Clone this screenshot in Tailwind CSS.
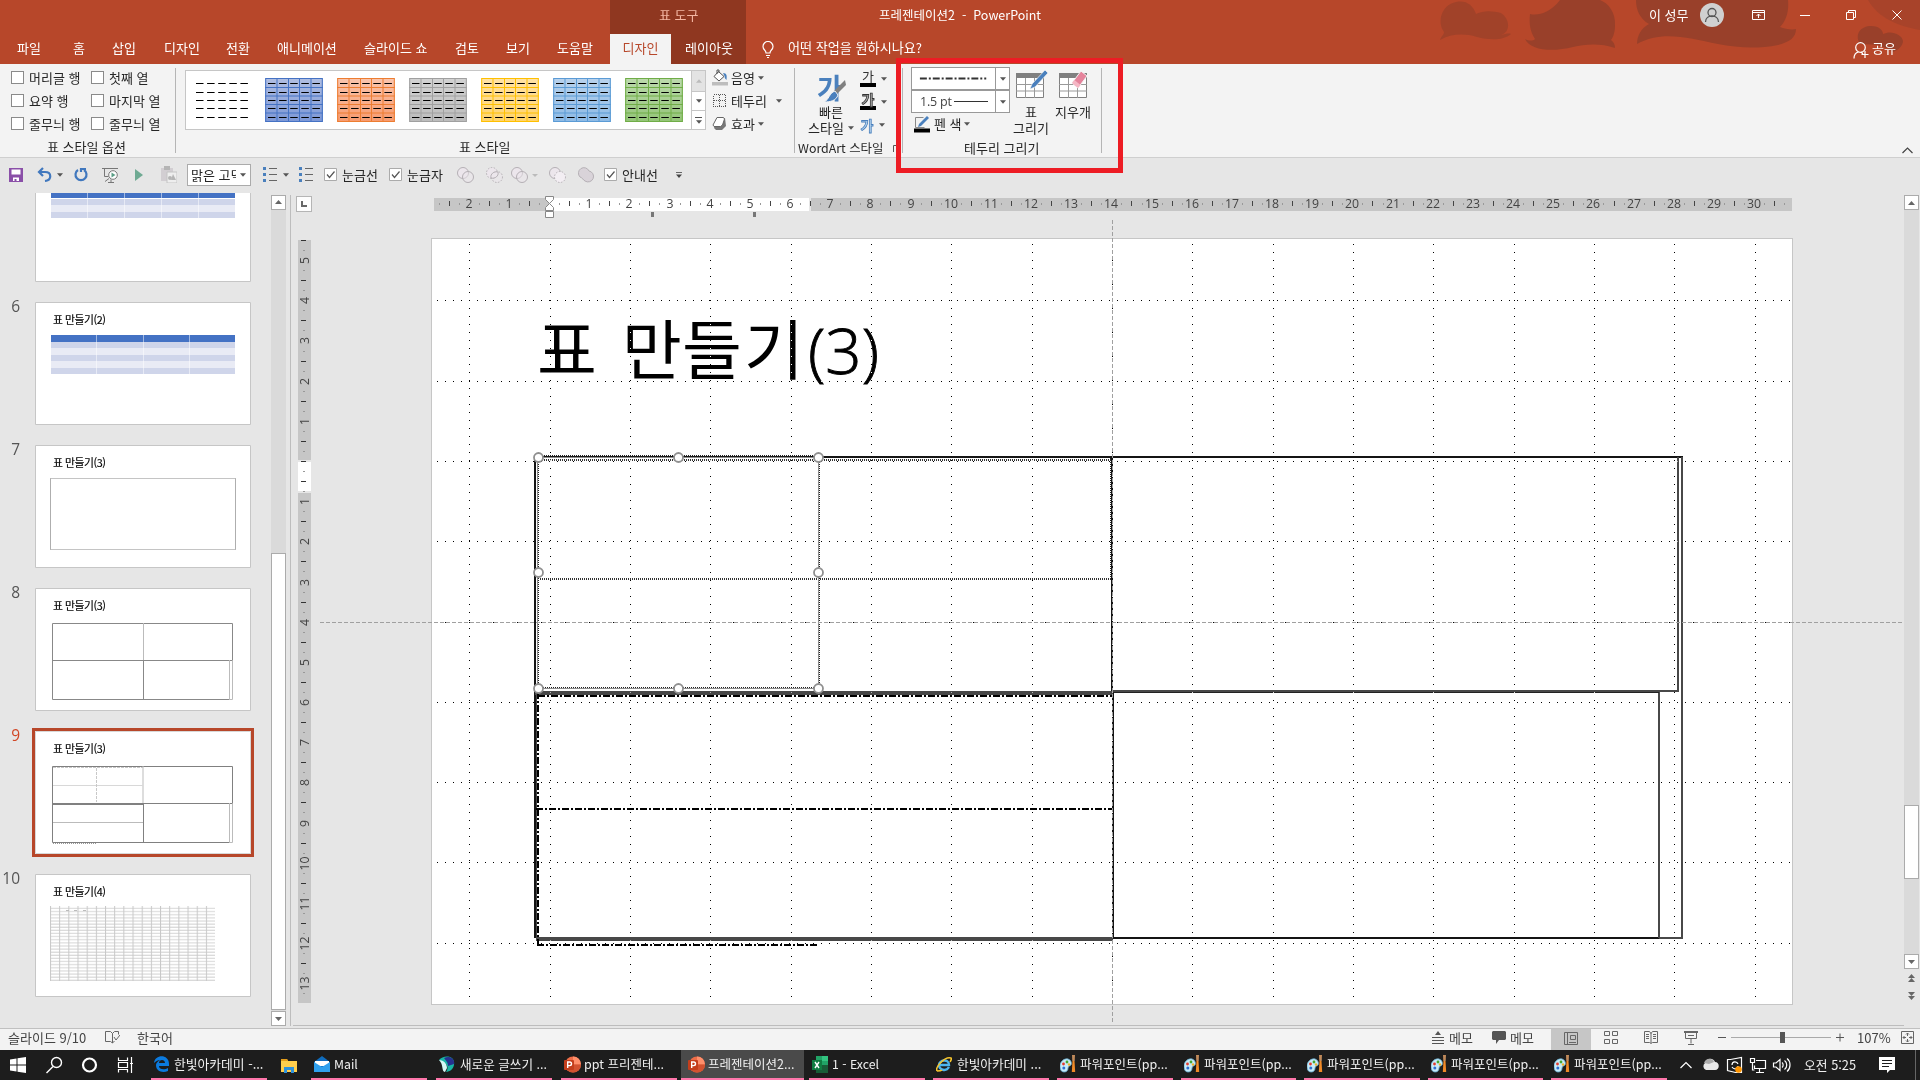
<!DOCTYPE html>
<html lang="ko">
<head>
    <meta charset="UTF-8">
    <meta name="viewport" content="width=device-width, initial-scale=1.0">
    <title>프레젠테이션2 - PowerPoint</title>
    <script src="https://cdn.jsdelivr.net/npm/@tailwindcss/browser@4"></script>
</head>
<body class="w-[1920px] h-[1080px] overflow-hidden relative flex flex-col bg-[#e6e6e6] text-[13px] leading-4 text-[#262626] whitespace-nowrap font-[family-name:'Noto_Sans_CJK_KR','Open_Sans',sans-serif]">
    <!-- shared symbols -->
    <svg class="hidden">
        <symbol id="caret" viewBox="0 0 7 4"><path d="M0 0h7L3.5 4z" fill="currentColor"/></symbol>
        <symbol id="caret-up" viewBox="0 0 7 4"><path d="M0 4h7L3.5 0z" fill="currentColor"/></symbol>
        <symbol id="dashes" viewBox="0 0 58 44">
            <path d="M3 5.5h54M3 14.5h54M3 22.5h54M3 30.5h54M3 39.5h54" stroke="#000" stroke-width="1.2" stroke-dasharray="7.5 3.6" fill="none"/>
        </symbol>
        <symbol id="grid" viewBox="0 0 58 44">
            <path d="M1 .5h56M0 9.5h58M0 18h58M0 26.5h58M0 35h58M1 43.5h56M.7 0v44M12 0v44M23.5 0v44M34.5 0v44M46 0v44M57.3 0v44" stroke="currentColor" stroke-width="1" fill="none"/>
        </symbol>
        <symbol id="paint" viewBox="0 0 16 18">
            <path d="M0 11c0-4 4-8 8-7 3 1 4 4 3 6-1 1-3 1-3 3s-1 4-4 4-4-3-4-6z" fill="#c9ebf7" stroke="#6cb5d8" stroke-width=".8"/>
            <circle cx="3.500" cy="9" r="1.400" fill="#e33b2e"/><circle cx="7" cy="7" r="1.400" fill="#45a832"/><circle cx="3.800" cy="13" r="1.500" fill="#2e6fd1"/><circle cx="9" cy="9.500" r="1.200" fill="#f1b12c"/>
            <path d="M12.500 6l-.7 11h3.400l-.7-11z" fill="#f08a28"/><path d="M12 0h3l-.3 6h-2.400z" fill="#c08a5b"/>
        </symbol>
        <symbol id="ppt" viewBox="0 0 17 17">
            <circle cx="9" cy="8.500" r="8" fill="#ed6c47"/><path d="M9 .5a8 8 0 0 1 8 8H9z" fill="#ff8f6b"/><path d="M1 8.500a8 8 0 0 0 16 0z" fill="#d35230"/>
            <rect x="0" y="4" width="10" height="10" rx="1" fill="#c43e1c"/><path d="M3.700 12V6h2a1.700 1.700 0 0 1 0 3.600h-2" fill="none" stroke="#fff" stroke-width="1.400"/>
        </symbol>
    </svg>

    <!-- title bar and tabs -->
    <header class="h-16 shrink-0 relative bg-[#b7472a] text-white">
        <svg class="absolute right-0 top-0" width="500" height="64" viewBox="1420 0 500 64">
            <g fill="#99402a">
                <path d="M1440 40c2-5 4-5 4-8-7-10-3-27 12-30 10-2 17 3 20 12 8-4 17-3 25-1 9 6 10 19 0 22 4-1 8-2 10-1-8 7-22 6-34 3-14-4-26-3-37 3z" opacity=".75"/>
                <path d="M1530 14c8 2 20-1 30-14h40c8 3 16 12 15 26 0 6-2 12-4 14 3 2 4 5 4 8-14-5-30-4-42-1-20 5-42 4-48-8 4 2 8 2 10 0-5-8-6-15-5-25z"/>
                <path d="M1636 0h152c1 10-1 20-8 27 5 2 12 3 16 2 0 8-6 13-18 16-20 4-40 3-60-1-30-6-56-14-81 0 0-8 4-16 12-20-9-5-13-14-13-24z"/>
                <path d="M1860 44c-6-10 1-18 11-18 9 0 12 5 12 8 8-4 19 0 20 7 0 4-4 9-10 11-10-8-24-8-33-8z"/>
                <path d="M1868 0c10 18 30 26 52 30V0z" opacity=".5"/>
            </g>
        </svg>
        <div class="absolute left-[610px] top-0 w-[136px] h-16 bg-[#8f3720]"></div>
        <div class="relative h-[34px] flex items-center pt-0">
            <span class="ml-[659px] w-[220px] text-[#f3b6a2] -mt-1">표 도구</span>
            <span class="w-[770px] -mt-1 text-[12.5px]">프레젠테이션2&nbsp; - &nbsp;PowerPoint</span>
            <span class="w-[51px] -mt-1">이 성무</span>
            <svg class="-mt-1" width="210" height="26" viewBox="1700 2 210 26" fill="none" stroke="#fff">
                <circle cx="1712" cy="15" r="12" fill="#d0d0d0" stroke="none"/>
                <g stroke="#555" stroke-width="1.300"><circle cx="1712" cy="12.500" r="4"/><path d="M1705.500 22c0-8 13-8 13 0"/></g>
                <path d="M1752.500 10.500h12v9h-12zM1752.500 12.500h12M1758.500 18v-4M1756.500 16l2-2 2 2"/>
                <path d="M1800 15.500h10M1846.500 12.500h7v7h-7zM1848.500 12.500v-2h7v7h-2M1892.500 10.500l9 9M1901.500 10.500l-9 9"/>
            </svg>
        </div>
        <nav class="relative h-[30px] flex items-center pl-[17px] pb-[2px]">
            <span class="w-[56px]">파일</span><span class="w-[39px]">홈</span><span class="w-[52px]">삽입</span><span class="w-[62px]">디자인</span><span class="w-[51px]">전환</span><span class="w-[87px]">애니메이션</span><span class="w-[91px]">슬라이드 쇼</span><span class="w-[51px]">검토</span><span class="w-[51px]">보기</span><span class="w-[53px]">도움말</span>
            <span class="w-[61px] h-[30px] -mb-[2px] bg-[#f3f3f3] text-[#b7472a] text-center leading-[28px]">디자인</span>
            <span class="w-[91px] pl-[14px]">레이아웃</span>
            <svg class="mt-1" width="12" height="18" viewBox="0 0 12 18" fill="none" stroke="#fff" stroke-width="1.200"><path d="M4 12c0-3-3-3-3-6.500a5 5 0 0 1 10 0C11 9 8 9 8 12zM4 14.500h4M5 16.500h2"/></svg>
            <span class="ml-[14px] w-[1065px] text-[13.1px]">어떤 작업을 원하시나요?</span>
            <svg class="mt-1" width="16" height="17" viewBox="0 0 16 17" fill="none" stroke="#fff" stroke-width="1.200"><circle cx="7.500" cy="5.500" r="4.800"/><path d="M1 16.500c0-4 2-6 4.500-6.500M8 10l2 2M12 9v7M8.500 12.500h7"/></svg>
            <span class="ml-[3px]">공유</span>
        </nav>
    </header>

    <!-- ribbon -->
    <section class="h-[94px] shrink-0 bg-[#f3f3f3] border-b border-[#cfcfcf] flex pt-1">
        <div class="w-[176px] h-[85px] border-r border-[#b5b5b5] flex flex-col">
            <div class="grid grid-cols-[80px_90px] content-start pl-[11px] -mt-[2px] h-[74px]">
                <label class="flex items-center gap-[5px] h-[23px]"><i class="size-[13px] border border-[#8a8a8a] bg-white"></i>머리글 행</label>
                <label class="flex items-center gap-[5px] h-[23px]"><i class="size-[13px] border border-[#8a8a8a] bg-white"></i>첫째 열</label>
                <label class="flex items-center gap-[5px] h-[23px]"><i class="size-[13px] border border-[#8a8a8a] bg-white"></i>요약 행</label>
                <label class="flex items-center gap-[5px] h-[23px]"><i class="size-[13px] border border-[#8a8a8a] bg-white"></i>마지막 열</label>
                <label class="flex items-center gap-[5px] h-[23px]"><i class="size-[13px] border border-[#8a8a8a] bg-white"></i>줄무늬 행</label>
                <label class="flex items-center gap-[5px] h-[23px]"><i class="size-[13px] border border-[#8a8a8a] bg-white"></i>줄무늬 열</label>
            </div>
            <div class="text-center pt-1 pr-[2px]">표 스타일 옵션</div>
        </div>

        <div class="w-[619px] h-[85px] border-r border-[#b5b5b5] flex flex-col">
            <div class="flex pl-[9px] pt-[2px] h-[72px]">
                <div class="w-[507px] h-[60px] bg-white border border-[#c6c6c6] flex gap-[14px] pl-[7px] pt-[7px]">
                    <svg class="w-[58px] h-11"><use href="#dashes"/></svg>
                    <svg class="w-[58px] h-11 bg-linear-to-b from-[#b1bee1] to-[#7c97d6] text-[#4472c4]"><use href="#grid"/><use href="#dashes"/></svg>
                    <svg class="w-[58px] h-11 bg-linear-to-b from-[#f9c5ae] to-[#f69a6e] text-[#ed7d31]"><use href="#grid"/><use href="#dashes"/></svg>
                    <svg class="w-[58px] h-11 bg-linear-to-b from-[#d3d3d3] to-[#bcbcbc] text-[#a0a0a0]"><use href="#grid"/><use href="#dashes"/></svg>
                    <svg class="w-[58px] h-11 bg-linear-to-b from-[#ffe2a8] to-[#ffd36a] text-[#ffc000]"><use href="#grid"/><use href="#dashes"/></svg>
                    <svg class="w-[58px] h-11 bg-linear-to-b from-[#b9d2ec] to-[#8dbae5] text-[#5b9bd5]"><use href="#grid"/><use href="#dashes"/></svg>
                    <svg class="w-[58px] h-11 bg-linear-to-b from-[#bddaae] to-[#93c477] text-[#70ad47]"><use href="#grid"/><use href="#dashes"/></svg>
                </div>
                <div class="w-[15px] h-[60px] -ml-px flex flex-col border border-[#c6c6c6] bg-white text-[#555]">
                    <div class="h-[21px] bg-[#e3e3e3] border-b border-[#c6c6c6] flex items-center justify-center text-[#bbb]"><svg class="w-[6px] h-[4px]"><use href="#caret-up"/></svg></div>
                    <div class="h-[19px] border-b border-[#c6c6c6] flex items-center justify-center"><svg class="w-[6px] h-[4px]"><use href="#caret"/></svg></div>
                    <div class="grow flex flex-col gap-[2px] items-center justify-center"><i class="w-[7px] h-px bg-[#555]"></i><svg class="w-[6px] h-[4px]"><use href="#caret"/></svg></div>
                </div>
                <div class="pl-[6px] -mt-[4px]">
                    <div class="h-[23px] flex items-center">
                        <svg width="16" height="17" viewBox="0 0 16 17"><path d="M0 13h16v3.500H0z" fill="#bdbdbd"/><path d="M6.500 2.500l5.500 5-5 4.500-5-4.500zM5 5V1h2v3" fill="#fff" stroke="#555"/><path d="M11 4c4 0 4 3 3.500 7-1-1-2-2-2-4z" fill="#4a80bd"/></svg>
                        <span class="w-[27px] ml-[3px]">음영</span><svg class="w-[6px] h-[4px] text-[#555]"><use href="#caret"/></svg>
                    </div>
                    <div class="h-[23px] flex items-center">
                        <svg width="16" height="15" viewBox="0 0 16 15"><path d="M1.500 1.500h12v12h-12zM7.500 1.500v12M1.500 7.500h12" fill="none" stroke="#555" stroke-dasharray="1 1" shape-rendering="crispEdges"/></svg>
                        <span class="w-[45px] ml-[3px]">테두리</span><svg class="w-[6px] h-[4px] text-[#555]"><use href="#caret"/></svg>
                    </div>
                    <div class="h-[23px] flex items-center">
                        <svg width="16" height="15" viewBox="0 0 16 15"><path d="M2 12l2-9 9-1 1 8-4 4H4z" fill="#777"/><path d="M5 1.500h6.500l1 1.500-2 6-2 1.500H2L1 9z" fill="#fff" stroke="#666"/></svg>
                        <span class="w-[27px] ml-[3px]">효과</span><svg class="w-[6px] h-[4px] text-[#555]"><use href="#caret"/></svg>
                    </div>
                </div>
            </div>
            <div class="pl-[283px] pt-1">표 스타일</div>
        </div>

        <div class="w-[108px] h-[85px] border-r border-[#b5b5b5] flex flex-col">
            <div class="flex h-[72px]">
                <div class="w-[62px] pl-[12px] flex flex-col items-center">
                    <div class="relative w-[30px] h-[34px] mt-1 text-[#4a80bd] text-[28px] leading-[30px] font-bold">가
                        <svg class="absolute left-0 top-0" width="30" height="34" viewBox="0 0 30 34"><path d="M28 8l1 5-9 9-3-3z" fill="#808080"/><path d="M18 19l3 4c-2 6-8 7-14 7 5-2 5-9 11-11z" fill="#4a80bd" stroke="#f3f3f3"/></svg>
                    </div>
                    <span class="mt-[-2px] mr-[2px]">빠른</span>
                    <span class="flex items-center gap-[4px] mr-[2px]">스타일<svg class="w-[6px] h-[4px] text-[#555]"><use href="#caret"/></svg></span>
                </div>
                <div class="ml-[3px] -mt-[1px] text-[#555]">
                    <div class="h-[23px] flex items-center"><span class="w-4 h-[17px] border-b-4 border-black text-[13px] leading-[12px] text-center text-[#333] mr-[5px]">가</span><svg class="w-[6px] h-[4px]"><use href="#caret"/></svg></div>
                    <div class="h-[23px] flex items-center"><span class="w-4 h-[17px] border-b-4 border-black text-[14px] leading-[12px] text-center font-bold text-[#aaa] [-webkit-text-stroke:0.8px_#333] mr-[5px]">가</span><svg class="w-[6px] h-[4px]"><use href="#caret"/></svg></div>
                    <div class="h-[23px] flex items-center"><span class="w-[14px] text-[14px] font-bold text-[#b5d3ee] [-webkit-text-stroke:0.8px_#4a80bd] mr-[5px] text-center">가</span><svg class="w-[6px] h-[4px]"><use href="#caret"/></svg></div>
                </div>
            </div>
            <div class="pl-[3px] pt-1 flex justify-between items-center"><span class="text-[12.4px]">WordArt 스타일</span>
                <svg width="10" height="9" viewBox="0 0 10 9" fill="none" stroke="#555"><path d="M1.500 8V1.500H8M4 4l4 4M8.500 4.500v4H5"/></svg></div>
        </div>

        <div class="w-[199px] h-[85px] border-r border-[#b5b5b5] flex flex-col">
            <div class="flex h-[72px]">
                <div class="w-[106px] pl-2">
                    <div class="w-[99px] h-[23px] -mt-px bg-white border border-[#999] flex">
                        <svg width="84" height="21" viewBox="0 0 84 21"><path d="M8 10.500h67" stroke="#333" stroke-width="2" stroke-dasharray="7 2 2 2"/></svg>
                        <div class="w-[14px] border-l border-[#999] flex items-center justify-center text-[#555]"><svg class="w-[6px] h-[4px]"><use href="#caret"/></svg></div>
                    </div>
                    <div class="w-[99px] h-[23px] bg-white border border-[#999] flex">
                        <div class="w-[84px] pl-[8px] flex items-center gap-[2px] text-[12.5px] text-[#444] font-[family-name:'Open_Sans']"><span class="w-8 tracking-[-0.2px]">1.5 pt</span><i class="w-[34px] h-px bg-[#333]"></i></div>
                        <div class="w-[14px] border-l border-[#999] flex items-center justify-center text-[#555]"><svg class="w-[6px] h-[4px]"><use href="#caret"/></svg></div>
                    </div>
                    <div class="h-[22px] flex items-center pl-[3px]">
                        <svg width="16" height="17" viewBox="0 0 16 17"><path d="M1.500 1.500h8M1.500 1.500v10h9" stroke="#888" fill="none"/><path d="M13 0l2 2-8 8-3 1 1-3z" fill="#4a80bd"/><path d="M0 12.500h16v4H0z"/></svg>
                        <span class="w-[30px] ml-[4px]">펜 색</span><svg class="w-[6px] h-[4px] text-[#555]"><use href="#caret"/></svg>
                    </div>
                </div>
                <div class="w-[44px] flex flex-col items-center pt-[2px]">
                    <svg class="ml-[3px]" width="33" height="30" viewBox="0 0 33 30"><path d="M.5 4h27v23.500H.5z" fill="#fff" stroke="#808080"/><path d="M0 3h28v5H0z" fill="#808080"/><path d="M0 14.500h28M0 21h28M9.500 8v20M18.500 8v20" stroke="#999"/><path d="M29 0l3 3-13 14-5 2 2-5z" fill="#4a80bd" stroke="#f3f3f3" stroke-width=".7"/></svg>
                    <span class="mt-1">표</span><span>그리기</span>
                </div>
                <div class="w-[40px] flex flex-col items-center pt-[2px]">
                    <svg width="29" height="30" viewBox="0 0 29 30"><path d="M.5 4h27v23.500H.5z" fill="#fff" stroke="#808080"/><path d="M0 3h28v5H0z" fill="#808080"/><path d="M0 14.500h28M0 21h28M9.500 8v20M18.500 8v20" stroke="#999"/><path d="M22 1l6 5-9 12-6-5z" fill="#e5839b" stroke="#f3f3f3"/><path d="M15.500 10l6 5-2.500 3-6-5z" fill="#f5b6c4"/></svg>
                    <span class="mt-1">지우개</span>
                </div>
            </div>
            <div class="pl-[61px] pt-1">테두리 그리기</div>
        </div>
        <svg class="ml-auto mr-[7px] mt-[79px]" width="11" height="7" viewBox="0 0 11 7" fill="none" stroke="#444" stroke-width="1.200"><path d="M.5 6l5-5 5 5"/></svg>
    </section>

    <!-- quick access toolbar -->
    <section class="h-[35px] shrink-0 flex items-center pl-[9px] pb-[2px] text-[#555]">
        <svg width="14" height="14" viewBox="0 0 14 14"><path d="M0 0h14v14H0z" fill="#8a4fa8"/><path d="M2.500 1.500h9v5h-9zM4 9.500h6V13H4z" fill="#fff"/><path d="M5.500 11h2v3h-2z" fill="#8a4fa8"/></svg>
        <svg class="ml-[14px]" width="15" height="15" viewBox="0 0 15 15" fill="none" stroke="#4178be" stroke-width="2.200"><path d="M6 1L2 5l4 4M2.500 5H8c7 0 7 8 0 9"/></svg>
        <svg class="w-[6px] h-[4px] ml-[5px]"><use href="#caret"/></svg>
        <svg class="ml-[11px]" width="14" height="15" viewBox="0 0 14 15" fill="none" stroke="#4178be" stroke-width="2.200"><path d="M4 3a5.500 5.500 0 1 0 6 0M7 5V2h5"/></svg>
        <svg class="ml-[14px]" width="16" height="16" viewBox="0 0 16 16" fill="none" stroke="#777"><path d="M0 1.500h16M2.500 2v7.500h4M6 15.500h6M3 14.500l4-3"/><circle cx="11" cy="8" r="4.300" fill="#fff"/><path d="M9.500 5.500l4 2.500-4 2.500z" fill="#5b9e86" stroke="none"/><path d="M9 12.500v3"/></svg>
        <svg class="ml-[17px]" width="8" height="12" viewBox="0 0 8 12"><path d="M0 0l8 6-8 6z" fill="#6faa93"/></svg>
        <svg class="ml-[18px]" width="16" height="17" viewBox="0 0 16 17"><path d="M0 2h12v13H0z" fill="#d2ced2"/><path d="M3 0h6v4H3z" fill="#b5b5b5"/><path d="M6 6h10v11H6z" fill="#eee" stroke="#c4c4c4"/><circle cx="9" cy="12" r="2" fill="#b5b5b5"/><path d="M12 8l3 6h-5z" fill="#b5b5b5"/></svg>
        <div class="ml-[10px] w-[64px] h-[22px] border border-[#ababab] bg-white flex items-center pl-[3px] text-[#262626]"><span class="w-[45px] overflow-hidden text-[13px]">맑은 고딕</span><svg class="w-[6px] h-[4px] ml-[4px] text-[#555]"><use href="#caret"/></svg></div>
        <svg class="ml-[12px]" width="14" height="16" viewBox="0 0 14 16"><path d="M0 0h3v3H0zM0 6h3v3H0zM0 12h3v3H0z" fill="#4a80bd"/><path d="M6 1.500h8M6 7.500h8M6 13.500h8" stroke="#666" stroke-width="1.200"/></svg>
        <svg class="w-[6px] h-[4px] ml-[6px]"><use href="#caret"/></svg>
        <svg class="ml-[10px]" width="14" height="16" viewBox="0 0 14 16"><path d="M0 0h3v3H0zM0 6h3v3H0zM0 12h3v3H0z" fill="#4a80bd"/><path d="M6 1.500h8M6 7.500h8M6 13.500h8" stroke="#666" stroke-width="1.200"/></svg>
        <svg class="ml-[11px]" width="13" height="13" viewBox="0 0 13 13"><path d="M.5.5h12v12H.5z" fill="#fff" stroke="#ababab"/><path d="M3 6.500l2.500 3 5-6" fill="none" stroke="#555" stroke-width="1.200"/></svg>
        <span class="ml-[5px] w-[47px] text-[#262626]">눈금선</span>
        <svg width="13" height="13" viewBox="0 0 13 13"><path d="M.5.5h12v12H.5z" fill="#fff" stroke="#ababab"/><path d="M3 6.500l2.500 3 5-6" fill="none" stroke="#555" stroke-width="1.200"/></svg>
        <span class="ml-[5px] w-[49px] text-[#262626]">눈금자</span>
        <svg width="142" height="18" viewBox="456 166 142 18" fill="#ece6ec" stroke="#b5b0b5">
            <circle cx="463" cy="173" r="5.500"/><circle cx="468" cy="177" r="5.500" fill-opacity=".5"/>
            <circle cx="492" cy="173" r="5.500" stroke-dasharray="1.500 1.500"/><circle cx="497" cy="177" r="5.500" fill-opacity=".5" stroke-dasharray="1.500 1.500"/><path d="M491 178c-1-4 3-7 7-6 1 4-3 7-7 6z"/>
            <circle cx="517" cy="173" r="5.500"/><circle cx="522" cy="177" r="5.500" fill-opacity=".5"/>
            <path d="M532 174h6l-3 3z" fill="#bbb" stroke="none"/>
            <circle cx="555" cy="173" r="5.500"/><circle cx="560" cy="177" r="5.500" fill="#f3eef3" stroke-dasharray="1.500 1.500"/>
            <path d="M580 177a5.500 5.500 0 1 1 9-6 5.500 5.500 0 1 1-4 10c-2-1-2-3-5-4z" fill="#d9d3d9"/>
        </svg>
        <svg class="ml-[6px]" width="13" height="13" viewBox="0 0 13 13"><path d="M.5.5h12v12H.5z" fill="#fff" stroke="#ababab"/><path d="M3 6.500l2.500 3 5-6" fill="none" stroke="#555" stroke-width="1.200"/></svg>
        <span class="ml-[5px] w-[54px] text-[#262626]">안내선</span>
        <svg width="6" height="6" viewBox="0 0 7 7"><path d="M0 .5h7" stroke="#444"/><path d="M0 3h7L3.500 7z" fill="#444"/></svg>
    </section>

    <main class="h-[836px] shrink-0 flex border-b border-[#c0c0c0]">
        <!-- slide thumbnails -->
        <aside class="w-[271px] h-[833px] overflow-hidden flex flex-col gap-5 text-[15.5px] text-[#555]">
            <div class="flex h-[89px] shrink-0"><span class="w-[35px]"></span>
                <svg width="216" height="89" viewBox="35 193 216 89"><path d="M35.500 193v88.500h215V193" fill="#fff" stroke="#c6c6c6"/><path d="M51 193h184v5H51z" fill="#4472c4"/><path d="M51 199h184v6H51zM51 212h184v6H51z" fill="#cfd5ea"/><path d="M51 205h184v7H51z" fill="#e9ebf5"/><path d="M87.500 193v25M124.500 193v25M161.500 193v25M198.500 193v25" stroke="#fff" stroke-opacity=".5"/></svg>
            </div>
            <div class="flex h-[123px] shrink-0"><span class="w-[20px] mr-[15px] text-right leading-[9px] font-[family-name:'Open_Sans']">6</span>
                <svg width="216" height="123" viewBox="35 302 216 123"><path d="M35.500 302.500h215v122h-215z" fill="#fff" stroke="#c6c6c6"/><text x="53" y="324" font-size="10.800" fill="#000" stroke="#000" stroke-width=".15" textLength="53">표 만들기(2)</text><path d="M51 335h184v7H51z" fill="#4472c4"/><path d="M51 342h184v6H51zM51 355h184v6H51zM51 368h184v6H51z" fill="#cfd5ea"/><path d="M51 348h184v7H51zM51 361h184v7H51z" fill="#e9ebf5"/><path d="M96.500 335v39M143.500 335v39M189.500 335v39" stroke="#fff" stroke-opacity=".5"/></svg>
            </div>
            <div class="flex h-[123px] shrink-0"><span class="w-[20px] mr-[15px] text-right leading-[9px] font-[family-name:'Open_Sans']">7</span>
                <svg width="216" height="123" viewBox="35 445 216 123"><path d="M35.500 445.500h215v122h-215z" fill="#fff" stroke="#c6c6c6"/><text x="53" y="467" font-size="10.800" fill="#000" stroke="#000" stroke-width=".15" textLength="53">표 만들기(3)</text><path d="M50.500 478.500h185v71h-185z" fill="none" stroke="#c4c4c4"/><path d="M50.500 478.500v71M235.500 478.500v71" stroke="#999" stroke-dasharray="1 1"/></svg>
            </div>
            <div class="flex h-[123px] shrink-0"><span class="w-[20px] mr-[15px] text-right leading-[9px] font-[family-name:'Open_Sans']">8</span>
                <svg width="216" height="123" viewBox="35 588 216 123"><path d="M35.500 588.500h215v122h-215z" fill="#fff" stroke="#c6c6c6"/><text x="53" y="610" font-size="10.800" fill="#000" stroke="#000" stroke-width=".15" textLength="53">표 만들기(3)</text><path d="M52.500 699.500v-76h180v37M52.500 660.500h180M52.500 699.500h177M143.500 660v39" fill="none" stroke="#888"/><path d="M143.500 623v37M229.500 660v39.500h3v-39" fill="none" stroke="#bbb"/></svg>
            </div>
            <div class="flex h-[123px] shrink-0"><span class="w-[20px] mr-[12px] text-right leading-[9px] text-[#d24726] font-[family-name:'Open_Sans']">9</span>
                <svg class="-mt-[3px]" width="222" height="129" viewBox="32 728 222 129"><path d="M33.500 729.500h219v126h-219z" fill="#fff" stroke="#b7472a" stroke-width="3"/><path d="M35.500 731.500h215v122h-215z" fill="none" stroke="#d8d8d8"/><text x="53" y="753" font-size="10.800" fill="#000" stroke="#000" stroke-width=".15" textLength="53">표 만들기(3)</text><path d="M52.500 842.500v-76h180v37M52.500 803.500h180M52.500 842.500h177M143.500 804v38M53 804.500h90" fill="none" stroke="#808080"/><path d="M143 766v37M53 822.500h90M229.500 803v39.500h3v-39" fill="none" stroke="#bbb"/><path d="M53 785.500h90" stroke="#d8d8d8"/><path d="M96.500 768v34M53 767.500h90" stroke="#c8c8c8" stroke-dasharray="3 1" fill="none"/><path d="M53 843.500h44" stroke="#999" stroke-dasharray="1 1"/></svg>
            </div>
            <div class="flex h-[123px] shrink-0"><span class="w-[20px] mr-[15px] flex justify-end leading-[9px] font-[family-name:'Open_Sans']">10</span>
                <svg width="216" height="123" viewBox="35 874 216 123">
                    <defs><pattern id="cells" x="50" y="906" width="9.170" height="3.120" patternUnits="userSpaceOnUse"><path d="M0 2.500h9.200" stroke="#d2d2d2"/><path d="M.5 0v3.200" stroke="#c8c8c8"/></pattern></defs>
                    <path d="M35.500 874.500h215v122h-215z" fill="#fff" stroke="#c6c6c6"/><text x="53" y="896" font-size="10.800" fill="#000" stroke="#000" stroke-width=".15" textLength="53">표 만들기(4)</text><path d="M50 906h165v75H50z" fill="url(#cells)"/><path d="M66 910.500h3M74 910.500h3M83 910.500h3" stroke="#bbb"/></svg>
            </div>
        </aside>
        <div class="w-[15px] mt-[2px] h-[831px] flex flex-col bg-[#dadada] text-[#666]">
            <div class="size-[15px] bg-white border border-[#ababab] flex items-center justify-center"><svg class="w-[7px] h-[4px]"><use href="#caret-up"/></svg></div>
            <div class="mt-[343px] h-[458px] bg-white border border-[#ababab]"></div>
            <div class="mt-px size-[15px] bg-white border border-[#ababab] flex items-center justify-center"><svg class="w-[7px] h-[4px]"><use href="#caret"/></svg></div>
        </div>

        <!-- rulers and slide -->
        <svg id="stage" width="1618" height="835" viewBox="286 193 1618 835" shape-rendering="crispEdges">
            <path d="M290.500 195v831M293 1025.500h1611" stroke="#bdbdbd"/>
            <rect x="296.500" y="196.500" width="15" height="15" fill="#fdfdfd" stroke="#b5b5b5"/><path d="M302 201v5h5" fill="none" stroke="#666" stroke-width="2"/>
            <path d="M298 240h13v220h-13zM298 493h13v510h-13zM434 198h115v13H434zM811 198h981v13H811z" fill="#c6c6c6"/>
            <path d="M298 462h13v29h-13zM549 198h260v13H549z" fill="#fff"/>
            <g id="ruler" font-size="12.300" fill="#444" text-anchor="middle" font-family="'Open Sans'"></g>
            <path d="M545.500 196.500h8v3l-4 4 4 4v3h-8v-3l4-4-4-4zM545.500 211.500h8v6h-8z" fill="#fff" stroke="#888" shape-rendering="auto"/>
            <path d="M651 212h3v5h-3zM753 212h3v5h-3z" fill="#777"/>

            <rect x="431.500" y="238.500" width="1361" height="766" fill="#fff" stroke="#c6c6c6"/>
            <g shape-rendering="auto" fill="#000">
                <text y="374" font-size="65"><tspan x="537">표</tspan><tspan x="622">만</tspan><tspan x="682">들</tspan><tspan x="744">기</tspan></text>
                <text x="808" y="374" font-size="63" font-weight="300" stroke="#000" stroke-width=".9" textLength="71" lengthAdjust="spacingAndGlyphs" font-family="'Open Sans'">(3)</text>
            </g>

            <!-- table borders -->
            <g fill="none">
                <path d="M534 457h1149M535 456v482M1112 456v236M1113 692v246M1112 938h547" stroke="#141414" stroke-width="2"/>
                <path d="M1678 457v234M1682 457v482M1659 692v246M1112 691h567M1659 938h24" stroke="#484848" stroke-width="2"/>
                <path d="M1112 692.500h547" stroke="#222"/>
                <path d="M535 693h578M536 939h577" stroke="#484848" stroke-width="4"/>
                <path d="M536.500 692v246" stroke="#484848"/>
                <path d="M538 696h574M536 809h577M538 692v253M537 945h282" stroke="#000" stroke-width="2" stroke-dasharray="7 2 2 2"/>
                <path d="M540 455.500h278M819.500 458v230M539 687.500h280M1110.500 458v121M538.500 458v230" stroke="#222" stroke-dasharray="1 1"/>
                <path d="M540 460h572M540 579h572" stroke="#333" stroke-width="2" stroke-dasharray="1 1"/>
                <path d="M538 457.500h280.500v231H537.500v-231" stroke="#8c8c8c"/>
            </g>
            <g id="dots" class="mix-blend-difference" stroke="#fff"></g>
            <path d="M320 622.500h1584M1112.500 220v803" stroke="#a0a0a0" stroke-dasharray="4 2" fill="none"/>
            <g fill="#fff" stroke="#909090" stroke-width="1.800" shape-rendering="auto">
                <circle cx="538.500" cy="457.500" r="4.500"/><circle cx="678.500" cy="457.500" r="4.500"/><circle cx="818.500" cy="457.500" r="4.500"/>
                <circle cx="538.500" cy="572.500" r="4.500"/><circle cx="818.500" cy="572.500" r="4.500"/>
                <circle cx="538.500" cy="688.500" r="4.500"/><circle cx="678.500" cy="688.500" r="4.500"/><circle cx="818.500" cy="688.500" r="4.500"/>
            </g>
        </svg>

        <div class="w-[15px] mt-[2px] h-[810px] flex flex-col text-[#666]">
            <div class="bg-[#dadada] h-[774px] flex flex-col">
                <div class="size-[15px] bg-white border border-[#ababab] flex items-center justify-center"><svg class="w-[7px] h-[4px]"><use href="#caret-up"/></svg></div>
                <div class="mt-[595px] h-[74px] bg-white border border-[#ababab]"></div>
                <div class="mt-auto size-[15px] bg-white border border-[#ababab] flex items-center justify-center"><svg class="w-[7px] h-[4px]"><use href="#caret"/></svg></div>
            </div>
            <svg class="mt-[5px] ml-1" width="7" height="26" viewBox="0 0 7 26" fill="#666"><path d="M0 4l3.500-4L7 4zM0 8l3.500-4L7 8zM0 18h7l-3.500 4zM0 22h7l-3.500 4z"/></svg>
        </div>
    </main>

    <!-- status bar -->
    <section class="h-[21px] shrink-0 bg-[#f3f3f3] flex items-center pl-2 pb-[4px] text-[#444]">
        <span class="w-[97px]">슬라이드 9/10</span>
        <svg width="15" height="13" viewBox="0 0 15 13" fill="none" stroke="#666"><path d="M7.500 12V2.500L5.500.5h-5v10h5zl2-2M7.500 2.500l2-2h4v3M9 6l2 3 4-5"/></svg>
        <span class="ml-[17px] w-[1295px]">한국어</span>
        <svg width="12" height="13" viewBox="0 0 12 13"><path d="M3 4l3-4 3 4z" fill="#555"/><path d="M0 6.500h12M0 9.500h12M0 12.500h12" stroke="#555"/></svg>
        <span class="ml-[5px] w-[43px]">메모</span>
        <svg width="14" height="13" viewBox="0 0 14 13"><path d="M1 0h12l1 1v7l-1 1H7l-3 4V9H1L0 8V1z" fill="#555"/></svg>
        <span class="ml-[4px] w-[41px]">메모</span>
        <div class="w-10 h-[21px] -mb-[4px] bg-[#c6c6c6] flex items-center justify-center pb-[2px]"><svg width="14" height="13" viewBox="0 0 14 13" fill="none" stroke="#666"><path d="M.5.500h13v12H.5zM3.500.5v12M6.500 3.500h5v4h-5zM5 10.500h7"/></svg></div>
        <svg class="ml-[13px]" width="14" height="13" viewBox="0 0 14 13" fill="none" stroke="#666"><path d="M.5.500h5v4h-5zM8.500.5h5v4h-5zM.5 8.500h5v4h-5zM8.500 8.500h5v4h-5z"/></svg>
        <svg class="ml-[26px]" width="14" height="13" viewBox="0 0 14 13" fill="none" stroke="#666"><path d="M.5.500h5l1.500 2 1.500-2h5v11h-5L7 12.500l-1.500-1h-5zM7 2v10M2 3.500h3M2 5.500h3M2 7.500h3M9 3.500h3M9 5.500h3M9 7.500h3"/></svg>
        <svg class="ml-[26px]" width="14" height="14" viewBox="0 0 14 14" fill="none" stroke="#666"><path d="M0 1h14" stroke-width="2"/><path d="M1.500 2v5.500h11V2M4 4.500h6M7 7.500v5M4 13.500h6"/></svg>
        <svg class="ml-[20px]" width="127" height="13" viewBox="0 0 127 13" fill="none" stroke="#555"><path d="M0 6.500h8M118 6.500h8M122 2.500v8"/><path d="M13 6.500h100" stroke="#aaa"/><path d="M62 1h5v11h-5z" fill="#555" stroke="none"/></svg>
        <span class="ml-[12px] w-[44px]">107%</span>
        <svg class="-mr-2" width="13" height="13" viewBox="0 0 13 13" fill="none" stroke="#666"><path d="M.5.500h12v12H.5z"/><path d="M6.500 2v3M6.500 8v3M2 6.500h3M8 6.500h3M5 3.500l1.500-1.500 1.500 1.500M5 9.500l1.500 1.500 1.500-1.500M3.500 5L2 6.500 3.500 8M9.500 5L11 6.500 9.500 8"/></svg>
    </section>

    <!-- taskbar -->
    <footer class="h-[30px] shrink-0 bg-[#1d1d1d] text-[#f0f0f0] flex items-center">
        <svg width="151" height="30" viewBox="0 0 151 30" fill="none" stroke="#fff">
            <path d="M10 9.500l6.500-1v6H10zM17.500 8.300L26 7v7.500h-8.500zM10 15.500h6.500v6l-6.500-1zM17.500 15.500H26V23l-8.500-1.300z" fill="#fff" stroke="none"/>
            <circle cx="56.500" cy="12.500" r="5" stroke-width="1.400"/><path d="M53 16.500L46.500 23" stroke-width="1.400"/>
            <circle cx="89.500" cy="15" r="6.500" stroke-width="2.200"/>
            <path d="M118.500 7.500v3h9v-3M118.500 22.500v-3h9v3M118.500 12.500h9v5h-9zM131.500 7v16M130 13.500h3" stroke-width="1.200"/>
        </svg>
        <div class="w-[116px] h-[30px] border-b-2 border-[#ff76ab] flex items-center pl-[3px] gap-1 mr-[14px]">
            <svg width="16" height="16" viewBox="0 0 16 16"><path d="M0 7c1-9 15-9 15 1v2H5c0 4 6 4 9 2v3c-5 2-12 1-12-6 0-2 2-4 4-5-2 0-4 1-6 3zM5 7h6c0-4-6-4-6 0z" fill="#0b7be0"/></svg>
            <span class="text-[12.8px]">한빛아카데미 -...</span></div>
        <svg width="16" height="15" viewBox="0 0 16 15"><path d="M0 1h6l1 2h9v11H0z" fill="#ffce4d"/><path d="M0 1h6l1 2H0z" fill="#e39d1b"/><path d="M3 15V9h10v6h-3v-3H6v3z" fill="#2f92dc"/></svg>
        <div class="w-[116px] h-[30px] border-b-2 border-[#ff76ab] flex items-center pl-[3px] gap-1 ml-[14px] mr-[9px]">
            <svg width="16" height="16" viewBox="0 0 16 16"><path d="M0 6l8-6 8 6v10H0z" fill="#0f6cbd"/><path d="M1 5h14v5H1z" fill="#fff"/><path d="M0 6l8 5 8-5v10H0z" fill="#2ea0ee"/></svg>
            <span class="text-[12.3px]">Mail</span></div>
        <div class="w-[116px] h-[30px] border-b-2 border-[#ff76ab] flex items-center pl-[3px] gap-[5px] mr-[9px]">
            <svg width="16" height="16" viewBox="0 0 16 16"><path d="M0 4c4-5 14-5 15 2 1 6-4 10-8 10 3-5 2-8-7-12z" fill="#19b5a5"/><path d="M5 2c6-3 11 1 10 6l-6 2c0-4-2-5-4-8z" fill="#26318f"/><path d="M0 4c5 0 8 4 8 8l-2 4C2 15 5 9 0 4z" fill="#d5f7f4"/></svg>
            <span class="text-[12.6px]">새로운 글쓰기 ...</span></div>
        <div class="w-[116px] h-[30px] border-b-2 border-[#ff76ab] flex items-center pl-[3px] gap-[3px] mr-1"><svg class="size-[17px] shrink-0"><use href="#ppt"/></svg><span class="text-[12.5px]">ppt 프리젠테...</span></div>
        <div class="w-[123px] h-[30px] border-b-2 border-[#ff76ab] bg-[#4a4a4a] flex items-center pl-[7px] gap-[3px] mr-[5px]"><svg class="size-[17px] shrink-0"><use href="#ppt"/></svg><span class="text-[12.5px]">프레젠테이션2...</span></div>
        <div class="w-[116px] h-[30px] border-b-2 border-[#ff76ab] flex items-center pl-[3px] gap-[4px] mr-2">
            <svg width="16" height="17" viewBox="0 0 16 17"><path d="M4 0h12v17H4z" fill="#21a366"/><path d="M10 0h6v5h-6z" fill="#33c481"/><path d="M4 9h12v8H4z" fill="#185c37"/><path d="M0 4h10v10H0z" fill="#107c41"/><path d="M3 6l4 6M7 6l-4 6" stroke="#fff" stroke-width="1.400"/></svg>
            <span class="text-[12.3px]">1 - Excel</span></div>
        <div class="w-[116px] h-[30px] border-b-2 border-[#ff76ab] flex items-center pl-[3px] gap-[5px] mr-2">
            <svg width="16" height="16" viewBox="0 0 16 16" fill="none"><path d="M13 11c-3 5-10 3-10-2s10-7 10 0H4" stroke="#4db5ee" stroke-width="2.400"/><path d="M1 15c-2-4 8-15 14-13 1 1 0 2-1 4M1 15c2 0 4 0 5-1" stroke="#f7c52d" stroke-width="1.600"/></svg>
            <span class="text-[12.7px]">한빛아카데미 ...</span></div>
        <div class="w-[116px] h-[30px] border-b-2 border-[#ff76ab] flex items-center pl-[3px] gap-1 mr-2"><svg class="w-4 h-[18px] shrink-0"><use href="#paint"/></svg><span class="text-[12.5px]">파워포인트(pp...</span></div>
        <div class="w-[115px] h-[30px] border-b-2 border-[#ff76ab] flex items-center pl-[3px] gap-1 mr-2"><svg class="w-4 h-[18px] shrink-0"><use href="#paint"/></svg><span class="text-[12.5px]">파워포인트(pp...</span></div>
        <div class="w-[116px] h-[30px] border-b-2 border-[#ff76ab] flex items-center pl-[3px] gap-1 mr-2"><svg class="w-4 h-[18px] shrink-0"><use href="#paint"/></svg><span class="text-[12.5px]">파워포인트(pp...</span></div>
        <div class="w-[115px] h-[30px] border-b-2 border-[#ff76ab] flex items-center pl-[3px] gap-1 mr-2"><svg class="w-4 h-[18px] shrink-0"><use href="#paint"/></svg><span class="text-[12.5px]">파워포인트(pp...</span></div>
        <div class="w-[116px] h-[30px] border-b-2 border-[#ff76ab] flex items-center pl-[3px] gap-1"><svg class="w-4 h-[18px] shrink-0"><use href="#paint"/></svg><span class="text-[12.5px]">파워포인트(pp...</span></div>
        <svg class="ml-[13px]" width="112" height="30" viewBox="1680 0 112 30" fill="none" stroke="#fff" stroke-width="1.200">
            <path d="M1680.500 18l5.500-5.500 5.500 5.500"/>
            <path d="M1706 20a4 4 0 0 1-1-7c2-6 9-5 10-1 5 0 5 8 0 8z" fill="#e8e8e8" stroke="none"/><path d="M1704 13c2-6 9-5 10-1l-5 2z" fill="#aaa" stroke="none"/>
            <path d="M1727.500 9.500h3l11-2v15h-6l-8-2zM1732 15c0-4 5-4 6-1M1738 16c0 3-4 4-6 1"/><circle cx="1738.500" cy="19.500" r="3.300" fill="#ff9500" stroke="none"/>
            <path d="M1756 10.500h9.500v8h-11v-3M1759.500 19v3.500M1756 22.500h8M1750.500 8.500h4v4h-4zM1752.500 13v7h2"/>
            <path d="M1773.500 13v4h2.500l4 3.500v-11L1776 13zM1782 12.500c1.500 1 1.500 4 0 5M1784.500 10.500c3 2 3 7 0 9M1787 8.500c4 3 4 10 0 13"/>
        </svg>
        <span class="ml-[12px] w-[75px] text-[12.8px]">오전 5:25</span>
        <svg width="16" height="16" viewBox="0 0 16 16"><path d="M0 0h16v13h-5l-3 3v-3H0z" fill="#fff"/><path d="M3 3.500h10M3 6.500h10M3 9.500h7" stroke="#1d1d1d"/></svg>
        <i class="ml-auto mr-1 w-px h-[30px] bg-[#666]"></i>
    </footer>

    <!-- highlight frame over the draw-borders group -->
    <div class="absolute left-[896px] top-[58px] w-[227px] h-[115px] border-5 border-[#ed1c24]"></div>

    <script>
        const step = 40.17;
        const line = (x1, y1, x2, y2, extra = '') => `<path d="M${x1} ${y1}L${x2} ${y2}" ${extra}/>`;
        let ruler = '';
        for (let q = -11; q <= 123; q++) {
            const x = Math.round(549 + q * step / 4) + 0.5;
            if (q % 4 === 0) {
                if (q) ruler += `<text x="${x - 0.5}" y="208">${Math.abs(q / 4)}</text>`;
            } else if (q % 2 === 0) ruler += line(x, 201, x, 206, 'stroke="#444"');
            else ruler += line(x, 203, x, 205, 'stroke="#999"');
        }
        for (let q = -22; q <= 53; q++) {
            const y = Math.round(461 + q * step / 4) + 0.5;
            if (q % 4 === 0 && q) ruler += `<text transform="translate(309 ${y}) rotate(-90)">${Math.abs(q / 4)}</text>`;
            else if (q % 2 === 0) ruler += line(301, y, 306, y, 'stroke="#333"');
            else ruler += line(303, y, 305, y, 'stroke="#999"');
        }
        document.getElementById('ruler').innerHTML = ruler;

        // gridlines: one dot every 8px, one line every 2cm
        let dots = '';
        for (let k = -1; k <= 15; k++) {
            const x = Math.floor(550 + k * step * 2) + 0.5;
            dots += line(x, 244, x, 1001, 'stroke-dasharray="1 7"');
        }
        for (const y of [300, 381, 461, 541, 622, 702, 782, 862, 943]) {
            dots += line(437, y + 0.5, 1790, y + 0.5, 'stroke-dasharray="1 7"');
        }
        document.getElementById('dots').innerHTML = dots;
    </script>
</body>
</html>
